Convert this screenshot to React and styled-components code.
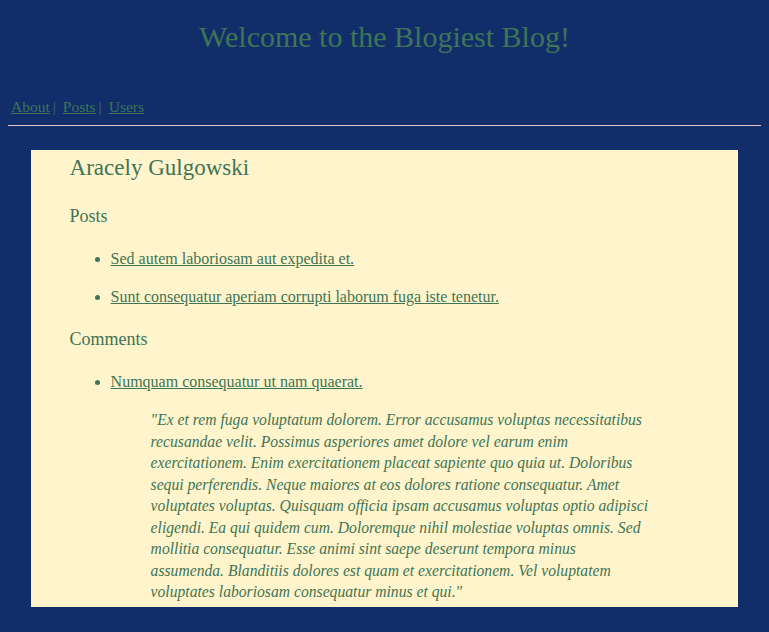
import React from 'react'
import styled, { createGlobalStyle } from 'styled-components'

const GlobalStyle = createGlobalStyle`
  body {
    margin: 8px;
    background-color: #112e6b;
    font-family: "Liberation Serif", serif;
    color: #3e7555;
  }
`

const user = {
  name: 'Aracely Gulgowski',
  posts: [
    'Sed autem laboriosam aut expedita et.',
    'Sunt consequatur aperiam corrupti laborum fuga iste tenetur.',
  ],
  comments: [
    {
      title: 'Numquam consequatur ut nam quaerat.',
      body: '"Ex et rem fuga voluptatum dolorem. Error accusamus voluptas necessitatibus recusandae velit. Possimus asperiores amet dolore vel earum enim exercitationem. Enim exercitationem placeat sapiente quo quia ut. Doloribus sequi perferendis. Neque maiores at eos dolores ratione consequatur. Amet voluptates voluptas. Quisquam officia ipsam accusamus voluptas optio adipisci eligendi. Ea qui quidem cum. Doloremque nihil molestiae voluptas omnis. Sed mollitia consequatur. Esse animi sint saepe deserunt tempora minus assumenda. Blanditiis dolores est quam et exercitationem. Vel voluptatem voluptates laboriosam consequatur minus et qui."',
    },
  ],
}

const App = () => {
  return (
    <>
      <GlobalStyle />
      <Title>Welcome to the Blogiest Blog!</Title>
      <Nav>
        <a href="#about">About</a>
        <Sep>|</Sep>
        <a href="#posts">Posts</a>
        <Sep>|</Sep>
        <a href="#users">Users</a>
      </Nav>
      <Rule />
      <Panel>
        <Name>{ user.name }</Name>
        <Section>Posts</Section>
        <List>
          { user.posts.map(( post, index ) => (
            <li key={ index }><a href="#post">{ post }</a></li>
          ))}
        </List>
        <Section>Comments</Section>
        <List>
          { user.comments.map(( comment, index ) => (
            <li key={ index }>
              <a href="#comment">{ comment.title }</a>
              <Quote>{ comment.body }</Quote>
            </li>
          ))}
        </List>
      </Panel>
    </>
  )
}

const Title = styled.h1`
  margin: 9px 0 0;
  text-align: center;
  font-size: 30px;
  font-weight: 400;
  line-height: 40px;
  color: #3e7555;
`

const Nav = styled.nav`
  margin-top: 40px;
  padding-left: 3px;
  font-size: 15.5px;
  line-height: 20px;

  a {
    color: #3e7555;
  }
`

const Sep = styled.span`
  margin: 0 7px 0 3px;
`

const Rule = styled.hr`
  margin: 8px 0 0;
  border: none;
  border-top: 1px solid #e6c9cf;
`

const Panel = styled.main`
  width: 94%;
  margin: 24px auto 0;
  box-sizing: border-box;
  padding: 4px 40px 4px 39px;
  background-color: #fff4cc;
`

const Name = styled.h2`
  margin: 0;
  font-size: 23px;
  font-weight: 400;
  line-height: 28px;
`

const Section = styled.h3`
  margin: 23px 0 0;
  font-size: 18px;
  font-weight: 400;
  line-height: 22px;
`

const List = styled.ul`
  margin: 21px 0 0;
  padding-left: 41px;
  font-size: 16px;

  li {
    line-height: 22px;
  }

  li:not(:last-child) {
    margin-bottom: 16px;
  }

  & + ${ Section } {
    margin-top: 20px;
  }

  a {
    color: #3e7555;
  }
`

const Quote = styled.blockquote`
  margin: 16px 48px 0 40px;
  font-style: italic;
  font-size: 15.65px;
  line-height: 21.5px;
`

export default App
